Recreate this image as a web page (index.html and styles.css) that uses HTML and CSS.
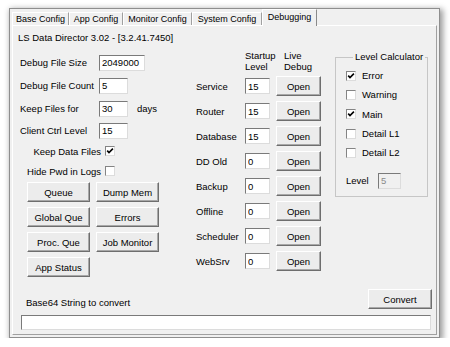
FILE: index.html
```html
<!DOCTYPE html>
<html lang="en">
<head>
    <meta charset="UTF-8">
    <meta name="viewport" content="width=device-width, initial-scale=1.0">
    <title>LS Data Director - Debugging</title>
    <link rel="stylesheet" href="styles.css">
</head>
<body>
    <div class="window">
        <div class="tabs">
            <div class="tab tab-base">Base Config</div>
            <div class="tab tab-app">App Config</div>
            <div class="tab tab-monitor">Monitor Config</div>
            <div class="tab tab-system">System Config</div>
            <div class="tab tab-debug active">Debugging</div>
        </div>
        <div class="panel">
            <div class="title">LS Data Director 3.02 - [3.2.41.7450]</div>
            <div class="main">
                <!-- left column: file settings and tool buttons -->
                <div class="left">
                    <div class="field"><label>Debug File Size</label><input class="text w-long" value="2049000"></div>
                    <div class="field"><label>Debug File Count</label><input class="text w-short" value="5"></div>
                    <div class="field"><label>Keep Files for</label><input class="text w-short" value="30"><span class="unit">days</span></div>
                    <div class="field last"><label>Client Ctrl Level</label><input class="text w-short" value="15"></div>
                    <div class="checkrow"><span>Keep Data Files</span><span class="check"><svg viewBox="0 0 8 8"><path d="M1.2 3.6 L3 5.6 L6.9 1.6"/></svg></span></div>
                    <div class="checkrow"><span>Hide Pwd in Logs</span><span class="check"></span></div>
                    <div class="buttons">
                        <button class="btn">Queue</button>
                        <button class="btn">Dump Mem</button>
                        <button class="btn">Global Que</button>
                        <button class="btn">Errors</button>
                        <button class="btn">Proc. Que</button>
                        <button class="btn">Job Monitor</button>
                        <button class="btn">App Status</button>
                    </div>
                </div>

                <!-- middle column: per-service levels -->
                <div class="mid">
                    <div class="head">
                        <div class="head-level">Startup<br>Level</div>
                        <div class="head-live">Live<br>Debug</div>
                    </div>
                    <div class="row"><label>Service</label><input class="text w-level" value="15"><button class="btn open">Open</button></div>
                    <div class="row"><label>Router</label><input class="text w-level" value="15"><button class="btn open">Open</button></div>
                    <div class="row"><label>Database</label><input class="text w-level" value="15"><button class="btn open">Open</button></div>
                    <div class="row"><label>DD Old</label><input class="text w-level" value="0"><button class="btn open">Open</button></div>
                    <div class="row"><label>Backup</label><input class="text w-level" value="0"><button class="btn open">Open</button></div>
                    <div class="row"><label>Offline</label><input class="text w-level" value="0"><button class="btn open">Open</button></div>
                    <div class="row"><label>Scheduler</label><input class="text w-level" value="0"><button class="btn open">Open</button></div>
                    <div class="row"><label>WebSrv</label><input class="text w-level" value="0"><button class="btn open">Open</button></div>
                </div>

                <!-- right column: level calculator -->
                <fieldset class="group">
                    <legend>Level Calculator</legend>
                    <div class="crow"><span class="check"><svg viewBox="0 0 8 8"><path d="M1.2 3.6 L3 5.6 L6.9 1.6"/></svg></span><span>Error</span></div>
                    <div class="crow"><span class="check"></span><span>Warning</span></div>
                    <div class="crow"><span class="check"><svg viewBox="0 0 8 8"><path d="M1.2 3.6 L3 5.6 L6.9 1.6"/></svg></span><span>Main</span></div>
                    <div class="crow"><span class="check"></span><span>Detail L1</span></div>
                    <div class="crow"><span class="check"></span><span>Detail L2</span></div>
                    <div class="levelrow"><label>Level</label><input class="text w-calc" value="5" disabled></div>
                </fieldset>
            </div>

            <div class="bottom">
                <div class="convert-row">
                    <span class="convert-label">Base64 String to convert</span>
                    <button class="btn convert">Convert</button>
                </div>
                <input class="text w-full" value="">
            </div>
        </div>
    </div>
</body>
</html>
```

FILE: styles.css
```css
* {
    box-sizing: border-box;
}
body {
    margin: 0;
    background-color: #fff;
    font-family: "Liberation Sans", Arial, sans-serif;
    font-size: 9.5px;
    color: #000;
}
.window {
    margin: 8px 0 0 9px;
    width: 431px;
    height: 330px;
    border: 1px solid #8e8e8e;
    background-color: #f0f0f0;
    box-shadow: 2px 2px 6px 1px rgba(0, 0, 0, 0.4);
    padding: 0 2px 2px 2px;
    display: flex;
    flex-direction: column;
}

/* tabs */
.tabs {
    display: flex;
    align-items: flex-end;
    height: 16px;
}
.tab {
    height: 13px;
    border: 1px solid;
    border-color: #fff #a0a0a0 transparent #fff;
    border-bottom: none;
    display: flex;
    align-items: center;
    justify-content: center;
    font-size: 9px;
    line-height: 11px;
    white-space: nowrap;
}
.tab.active {
    height: 17px;
    margin-bottom: -1px;
    position: relative;
    z-index: 1;
    background-color: #f0f0f0;
    border-right-color: #8a8a8a;
    padding-bottom: 2px;
}
.tab-base { width: 57px; }
.tab-app { width: 54px; }
.tab-monitor { width: 69px; }
.tab-system { width: 70px; }
.tab-debug { width: 55px; }

.panel {
    flex: 1;
    border: 1px solid;
    border-color: #fff #a0a0a0 #a0a0a0 #fff;
    display: flex;
    flex-direction: column;
}
.title {
    margin: 6px 0 0 5px;
    line-height: 12px;
}
.main {
    flex: 1;
    display: flex;
}

/* shared controls */
.text {
    height: 16px;
    border: 1px solid;
    border-color: #7a7a7a #dcdcdc #dcdcdc #7a7a7a;
    background-color: #fff;
    font: inherit;
    padding: 0 2px;
    margin: 0;
    color: #000;
}
.text:disabled {
    background-color: #f0f0f0;
    color: #8a8a8a;
}
.btn {
    height: 20px;
    padding: 0;
    margin: 0;
    font: inherit;
    color: #000;
    background-color: #ececec;
    border: 1px solid;
    border-color: #fff #6e6e6e #6e6e6e #fff;
    box-shadow: inset -1px -1px 0 #a8a8a8;
}
.check {
    width: 10px;
    height: 10px;
    border: 1px solid;
    border-color: #848484 #dcdcdc #dcdcdc #848484;
    background-color: #fff;
    display: inline-flex;
    flex-shrink: 0;
}
.check svg {
    width: 8px;
    height: 8px;
}
.check path {
    fill: none;
    stroke: #000;
    stroke-width: 1.6;
}

/* left column */
.left {
    width: 183px;
    padding: 7px 0 0 7px;
}
.field {
    display: flex;
    align-items: center;
    height: 23px;
}
.field.last {
    height: 21px;
}
.field label {
    width: 79px;
    white-space: nowrap;
}
.w-long { width: 46px; }
.w-short { width: 29px; }
.unit {
    margin-left: 9px;
}
.checkrow {
    width: 95px;
    height: 20px;
    display: flex;
    justify-content: flex-end;
    align-items: center;
    gap: 4px;
}
.buttons {
    display: grid;
    grid-template-columns: 63px 63px;
    column-gap: 6px;
    row-gap: 5px;
    margin: 1px 0 0 7px;
}

/* middle column */
.mid {
    width: 139px;
}
.head {
    display: flex;
    margin: 6px 0 4px 49px;
    line-height: 11px;
}
.head-level {
    width: 39px;
}
.row {
    display: flex;
    align-items: center;
    height: 20px;
    margin-bottom: 5px;
}
.row label {
    width: 49px;
}
.w-level {
    width: 25px;
    margin-right: 6px;
}
.open {
    width: 45px;
}

/* level calculator */
.group {
    margin: 7px 0 0 0;
    width: 93px;
    align-self: flex-start;
    border: 1px solid #c6c6c6;
    padding: 3px 0 7px 10px;
}
.group legend {
    margin-left: 7px;
    padding: 0 2px;
    line-height: 12px;
}
.crow {
    height: 19.3px;
    display: flex;
    align-items: center;
    gap: 6px;
}
.levelrow {
    display: flex;
    align-items: center;
    height: 16px;
    margin-top: 10.5px;
}
.levelrow label {
    width: 32px;
}
.w-calc {
    width: 23px;
}

/* base64 */
.bottom {
    padding: 0 4px 4px 8px;
}
.convert-row {
    display: flex;
    align-items: flex-end;
    height: 20px;
}
.convert-label {
    padding-left: 5px;
    line-height: 12px;
}
.convert {
    margin-left: auto;
    width: 64px;
}
.w-full {
    display: block;
    width: 410px;
    height: 15px;
    margin-top: 6px;
}
```
